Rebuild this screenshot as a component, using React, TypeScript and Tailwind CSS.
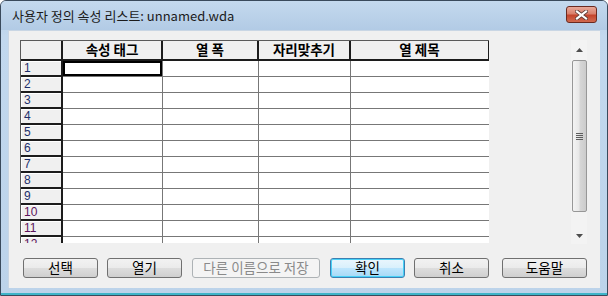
import React from "react";

const cols = [
  { title: "속성 태그", w: "w-[100px]" },
  { title: "열 폭", w: "w-[96px]" },
  { title: "자리맞추기", w: "w-[92px]" },
  { title: "열 제목", w: "w-[139px]" },
];

const rows = Array.from({ length: 12 }, (_, i) => i + 1);

function WinButton({
  label,
  width = "w-[75px]",
  primary,
  disabled,
}: {
  label: string;
  width?: string;
  primary?: boolean;
  disabled?: boolean;
}) {
  let cls =
    "border-[#707070] bg-[linear-gradient(#f2f2f2_0%,#ebebeb_48%,#dddddd_52%,#cfcfcf_100%)] text-black";
  if (primary)
    cls =
      "border-[#3c7fb1] bg-[linear-gradient(#eaf6fd_0%,#d9f0fc_48%,#bee6fd_52%,#a7d9f5_100%)] text-black shadow-[inset_0_0_0_1px_#48d1f7]";
  if (disabled) cls = "border-[#adb2b5] bg-[#f4f4f4] text-[#8a8a8a]";
  return (
    <div
      className={`${width} h-[20px] rounded-[3px] border flex items-center justify-center text-[13.5px] leading-none ${cls}`}
    >
      {label}
    </div>
  );
}

function Scrollbar() {
  return (
    <div className="w-[16px] h-[204px] bg-[#f3f3f3] flex flex-col items-center">
      <div className="h-[20px] w-full flex items-center justify-center">
        <svg width="7" height="4" viewBox="0 0 7 4">
          <path d="M3.5 0 L7 4 L0 4 Z" fill="#4d4d4d" />
        </svg>
      </div>
      <div className="w-[15px] h-[152px] rounded-[2px] border border-[#979797] bg-[linear-gradient(90deg,#f3f3f3_0%,#e8e8e8_45%,#d6d6d6_55%,#cbcbcb_100%)] flex items-center justify-center">
        <div className="flex flex-col gap-[1px]">
          <div className="w-[7px] h-[1px] bg-[#5d5d5d]" />
          <div className="w-[7px] h-[1px] bg-[#5d5d5d]" />
          <div className="w-[7px] h-[1px] bg-[#5d5d5d]" />
          <div className="w-[7px] h-[1px] bg-[#5d5d5d]" />
        </div>
      </div>
      <div className="flex-1" />
      <div className="h-[16px] w-full flex items-center justify-center">
        <svg width="7" height="4" viewBox="0 0 7 4">
          <path d="M0 0 L7 0 L3.5 4 Z" fill="#4d4d4d" />
        </svg>
      </div>
    </div>
  );
}

function Grid() {
  return (
    <div className="w-[469px] h-[203px] overflow-hidden border-l border-t border-[#5a5a5a] bg-white">
      <div className="flex h-[20px]">
        <div className="w-[42px] shrink-0 bg-[#f0f0f0] border-r-2 border-b-2 border-[#1c1c1c]" />
        {cols.map((c) => (
          <div
            key={c.title}
            className={`${c.w} shrink-0 bg-[#f0f0f0] border-r-2 border-b-2 border-[#1c1c1c] flex items-center justify-center text-[13.5px] font-bold leading-none text-black`}
          >
            {c.title}
          </div>
        ))}
      </div>
      {rows.map((r) => (
        <div key={r} className="flex h-[16px]">
          <div
            className={`w-[42px] shrink-0 bg-[#f0f0f0] border-r-2 border-b-2 border-[#1c1c1c] shadow-[inset_1px_1px_0_#ffffff] pl-[3px] flex items-center text-[12px] leading-none font-['Liberation_Sans',sans-serif] ${
              r >= 10 ? "text-[#5c145c]" : "text-[#1d2f6b]"
            }`}
          >
            {r}
          </div>
          {cols.map((c, i) => (
            <div
              key={c.title}
              className={`${c.w} shrink-0 border-r border-b border-[#777777] ${
                r === 1 && i === 0 ? "shadow-[inset_0_0_0_2px_#000000] border-[#000000]" : ""
              }`}
            />
          ))}
        </div>
      ))}
    </div>
  );
}

export default function App() {
  return (
    <div className="w-[608px] h-[296px] flex flex-col rounded-t-[6px] border border-[#3a4a5c] bg-[linear-gradient(#b6cde6_0%,#c2d8ee_12%,#bcd3ea_100%)] font-['Noto_Sans_CJK_KR',sans-serif] overflow-hidden">
      <div className="h-[29px] shrink-0 flex items-center pl-[11px] pr-[10px] bg-[linear-gradient(#c4d9ee,#b2cbe5)]">
        <div className="text-[13px] text-[#1b1b1b] leading-none">
          사용자 정의 속성 리스트: unnamed.wda
        </div>
        <div className="ml-auto w-[31px] h-[17px] mb-[2px] rounded-[3px] border border-[#6b2a20] bg-[linear-gradient(#e8a898_0%,#d9806c_45%,#c4442c_55%,#d06a50_100%)] flex items-center justify-center">
          <svg width="13" height="10" viewBox="0 0 13 10">
            <path
              d="M2 1.5 L11 8.5 M11 1.5 L2 8.5"
              stroke="#5a3a36"
              strokeWidth="3.8"
              strokeLinecap="square"
            />
            <path
              d="M2 1.5 L11 8.5 M11 1.5 L2 8.5"
              stroke="#ffffff"
              strokeWidth="2.2"
              strokeLinecap="square"
            />
          </svg>
        </div>
      </div>
      <div className="mx-[7px] h-[258px] bg-[#f0f0f0] border-l border-t border-[#c9d6e4] flex flex-col">
        <div className="flex mt-[9px] ml-[11px]">
          <Grid />
          <div className="ml-[82px]">
            <Scrollbar />
          </div>
        </div>
        <div className="flex mt-[14px] ml-[14px]">
          <WinButton label="선택" />
          <div className="w-[9px]" />
          <WinButton label="열기" />
          <div className="w-[10px]" />
          <WinButton label="다른 이름으로 저장" width="w-[128px]" disabled />
          <div className="w-[10px]" />
          <WinButton label="확인" primary />
          <div className="w-[9px]" />
          <WinButton label="취소" />
          <div className="w-[13px]" />
          <WinButton label="도움말" width="w-[85px]" />
        </div>
      </div>
      <div className="flex-1 border-b-2 border-[#3eb4c8]" />
    </div>
  );
}
